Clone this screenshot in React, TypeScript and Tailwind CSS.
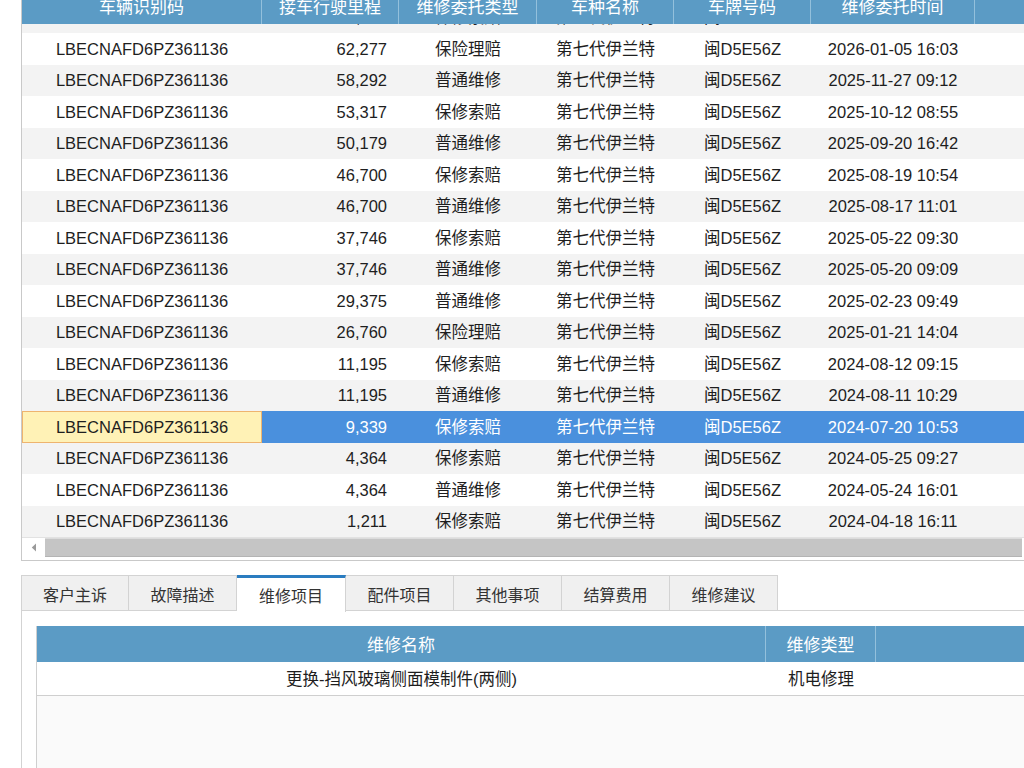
const font = {
  fontFamily: '"Liberation Sans", "Noto Sans CJK SC", sans-serif',
};

type Row = {
  vin: string;
  km: string;
  kind: string;
  model: string;
  plate: string;
  time: string;
};

const VIN = "LBECNAFD6PZ361136";
const MODEL = "第七代伊兰特";
const PLATE = "闽D5E56Z";

const rows: Row[] = [
  ["64,118", "保修索赔", "2026-01-19 10:26"],
  ["62,277", "保险理赔", "2026-01-05 16:03"],
  ["58,292", "普通维修", "2025-11-27 09:12"],
  ["53,317", "保修索赔", "2025-10-12 08:55"],
  ["50,179", "普通维修", "2025-09-20 16:42"],
  ["46,700", "保修索赔", "2025-08-19 10:54"],
  ["46,700", "普通维修", "2025-08-17 11:01"],
  ["37,746", "保修索赔", "2025-05-22 09:30"],
  ["37,746", "普通维修", "2025-05-20 09:09"],
  ["29,375", "普通维修", "2025-02-23 09:49"],
  ["26,760", "保险理赔", "2025-01-21 14:04"],
  ["11,195", "保修索赔", "2024-08-12 09:15"],
  ["11,195", "普通维修", "2024-08-11 10:29"],
  ["9,339", "保修索赔", "2024-07-20 10:53"],
  ["4,364", "保修索赔", "2024-05-25 09:27"],
  ["4,364", "普通维修", "2024-05-24 16:01"],
  ["1,211", "保修索赔", "2024-04-18 16:11"],
].map(([km, kind, time]) => ({ vin: VIN, km, kind, model: MODEL, plate: PLATE, time }));

const SELECTED = 13;
const cols = "grid grid-cols-[240px_137px_138px_137px_137px_164px_1fr]";
const heads = ["车辆识别码", "接车行驶里程", "维修委托类型", "车种名称", "车牌号码", "维修委托时间", ""];
const tabs = ["客户主诉", "故障描述", "维修项目", "配件项目", "其他事项", "结算费用", "维修建议"];

function GridRow({ row, index }: { row: Row; index: number }) {
  const selected = index === SELECTED;
  const stripe = index % 2 === 0 ? "bg-[#f3f3f3]" : "bg-white";
  const cell = selected ? "bg-[#4a90dd] text-white" : "";
  return (
    <div className={`${cols} h-[31.5px] text-[16.5px] ${selected ? "" : stripe} ${selected ? "" : "text-[#1e1e1e]"}`}>
      <div
        className={`flex items-center justify-center ${
          selected ? "bg-[#fff2b6] border border-[#eeb46f] text-[#1e1e1e]" : ""
        }`}
      >
        {row.vin}
      </div>
      <div className={`flex items-center justify-end pr-[12px] ${cell}`}>{row.km}</div>
      <div className={`flex items-center justify-center ${cell}`}>{row.kind}</div>
      <div className={`flex items-center justify-center ${cell}`}>{row.model}</div>
      <div className={`flex items-center justify-center ${cell}`}>{row.plate}</div>
      <div className={`flex items-center justify-center ${cell}`}>{row.time}</div>
      <div className={cell}></div>
    </div>
  );
}

export default function App() {
  return (
    <div className="w-[1024px] h-[768px] overflow-hidden bg-white pl-[21px]" style={font}>
      {/* upper grid */}
      <div className="h-[561px] border-l border-b border-[#c9c9c9] flex flex-col">
        <div className={`${cols} h-[24px] bg-[#5b9bc5] text-white text-[17px] relative z-10`}>
          {heads.map((h, i) => (
            <div
              key={i}
              className={`flex justify-center leading-[17px] -mt-[1px] ${
                i < heads.length - 1 ? "border-r border-[#93c0dc]" : ""
              }`}
            >
              {h}
            </div>
          ))}
        </div>
        <div className="h-[513px] overflow-hidden">
          <div className="-mt-[22.25px]">
            {rows.map((r, i) => (
              <GridRow key={i} row={r} index={i} />
            ))}
          </div>
        </div>
        {/* horizontal scrollbar */}
        <div className="h-[20px] flex items-start border-t border-[#e2e2e2] pr-[2px]">
          <div className="w-[23px] h-[19px] flex items-center justify-center">
            <svg width="6" height="9" viewBox="0 0 6 9">
              <path d="M5 0.5 L0.8 4.5 L5 8.5 Z" fill="#9a9a9a" />
            </svg>
          </div>
          <div className="flex-1 h-[19px] bg-[#c5c5c5] border-t border-[#dcdcdc] border-b border-b-[#b4b4b4]"></div>
        </div>
      </div>

      {/* tabs */}
      <div className="mt-[14px] flex h-[36px] text-[16px] text-[#333]">
        {tabs.map((t, i) =>
          i === 2 ? (
            <div
              key={t}
              className="w-[109px] h-[37px] bg-white border-t-[3px] border-t-[#2a7cc0] border-r border-r-[#d3d3d3] flex items-center justify-center pt-[3px] relative z-10"
            >
              {t}
            </div>
          ) : (
            <div
              key={t}
              className="w-[108px] bg-[#f0f0f0] border-y border-r border-[#d3d3d3] first:border-l flex items-center justify-center pt-[6px]"
            >
              {t}
            </div>
          )
        )}
        <div className="flex-1 border-b border-[#d3d3d3]"></div>
      </div>

      {/* tab panel */}
      <div className="border-l border-[#d3d3d3] h-[200px] pl-[14px] pt-[15px]">
        <div className="border-l border-[#cfcfcf] h-full bg-[#fafafa]">
          <div className="grid grid-cols-[729px_110px_1fr] h-[36px] bg-[#5b9bc5] text-white text-[17px]">
            <div className="flex items-center justify-center pt-[3px] border-r border-[#93c0dc]">维修名称</div>
            <div className="flex items-center justify-center pt-[3px] border-r border-[#93c0dc]">维修类型</div>
            <div></div>
          </div>
          <div className="grid grid-cols-[729px_110px_1fr] h-[34px] bg-white border-b border-[#cfcfcf] text-[16.5px] text-[#1e1e1e]">
            <div className="flex items-center justify-center pt-[2px]">更换-挡风玻璃侧面模制件(两侧)</div>
            <div className="flex items-center justify-center pt-[2px]">机电修理</div>
            <div></div>
          </div>
        </div>
      </div>
    </div>
  );
}
